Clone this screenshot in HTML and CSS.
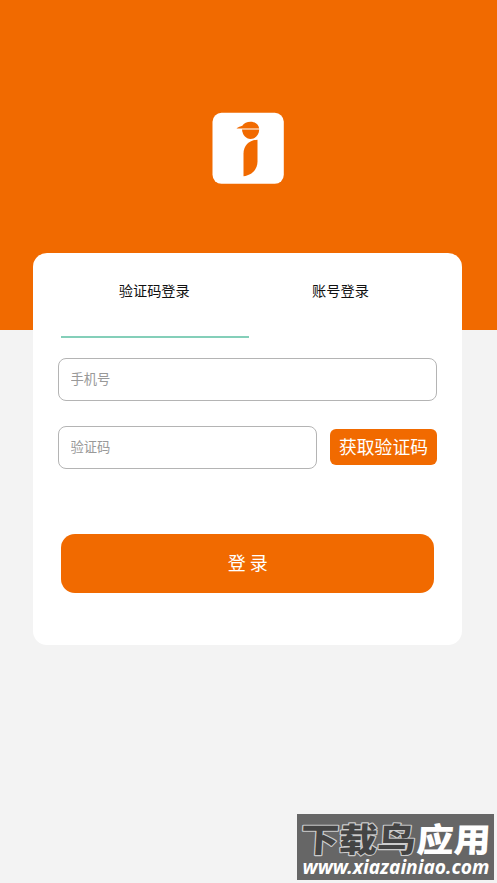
FILE: index.html
```html
<!DOCTYPE html>
<html lang="zh-CN">
<head>
<meta charset="utf-8">
<title>登录</title>
<link rel="stylesheet" href="styles.css">
</head>
<body>
<main class="page">
  <header class="hero">
    <svg class="logo" viewBox="0 0 72 72" aria-hidden="true">
      <rect x=".5" y=".8" width="71.300" height="71" rx="9" fill="#fff"/>
      <path class="logo-mark" d="M24.500 16.400C27 14.500 30 13.900 30.300 13.700C32 11 35 9.700 38.500 9.700C43 9.700 46.500 12 47.200 16.400Z"/>
      <path class="logo-mark" d="M30 17.500H47.200C47 23 43.500 26.900 38.500 26.900C33.800 26.900 30.500 23 30 17.500Z"/>
      <path class="logo-mark" d="M45.500 27.700V49.500C45.500 57.500 39.500 63.500 31.500 64.300V41.500C31.500 33.500 37.500 28 45.500 27.700Z"/>
    </svg>
  </header>
  <section class="card">
    <nav class="tabs">
      <a class="tab active">验证码登录</a>
      <a class="tab">账号登录</a>
    </nav>
    <form class="form">
      <input class="field" type="text" placeholder="手机号">
      <div class="code-row">
        <input class="field" type="text" placeholder="验证码">
        <button class="code-button" type="button">获取验证码</button>
      </div>
      <button class="login-button" type="button">登 录</button>
    </form>
  </section>
  <svg class="watermark" viewBox="0 0 197 66">
    <rect width="197" height="66" fill="#666"/>
    <g transform="translate(0 38) scale(1 .88)">
      <text class="mark-dark" transform="skewX(-3)" x="3" y="0" textLength="115" lengthAdjust="spacingAndGlyphs">下载鸟</text>
      <text class="mark-light" transform="skewX(-3)" x="119" y="0" textLength="74" lengthAdjust="spacingAndGlyphs">应用</text>
    </g>
    <text class="mark-url" x="5.500" y="60" textLength="187" lengthAdjust="spacingAndGlyphs">www.xiazainiao.com</text>
  </svg>
</main>
</body>
</html>
```
FILE: styles.css
```css
* { box-sizing: border-box; }
body {
  margin: 0;
  background: #f3f3f3;
  font-family: "Noto Sans CJK SC", sans-serif;
}
button, input { font: inherit; }
.page {
  position: relative;
  height: 883px;
  overflow: hidden;
}
.hero {
  display: flex;
  justify-content: center;
  height: 329.500px;
  padding: 112px 1px 0 0;
  background: #f16a00;
}
.logo { width: 72px; height: 72px; }
.logo-mark { fill: #f16a00; }
.card {
  position: relative;
  width: 428.500px;
  height: 392px;
  margin: -76.500px 0 0 33px;
  padding: 0 25px;
  background: #fff;
  border-radius: 14px;
}
.tabs {
  display: grid;
  grid-template-columns: 187.500px 1fr;
  height: 85px;
  padding: 0 3px;
}
.tab {
  height: 85px;
  padding-right: 1px;
  line-height: 75px;
  text-align: center;
  font-size: 14.200px;
  color: #111;
  border-bottom: 2px solid transparent;
}
.active { border-color: #84cfb9; }
.form {
  display: flex;
  flex-direction: column;
  padding-top: 20px;
}
.field {
  width: 100%;
  min-width: 0;
  height: 43px;
  padding: 0 11.500px 2px;
  border: 1px solid #b4b4b4;
  border-radius: 8px;
  background: #fff;
  font-size: 13.300px;
}
.field::placeholder { color: #999; opacity: 1; }
.code-row {
  display: flex;
  align-items: flex-start;
  gap: 13px;
  margin-top: 25px;
}
.code-button {
  flex: none;
  width: 107px;
  height: 36px;
  margin-top: 3px;
  padding: 0 0 2px 1px;
  border: 0;
  border-radius: 6px;
  background: #f16a00;
  color: #fff;
  font-size: 17.800px;
  line-height: 34px;
}
.login-button {
  height: 59px;
  margin: 64.500px 3px 0;
  padding: 0 0 3px 1px;
  border: 0;
  border-radius: 14px;
  background: #f16a00;
  color: #fff;
  font-size: 18px;
}
.watermark {
  position: absolute;
  left: 297px;
  top: 813.500px;
  width: 197px;
  height: 66px;
}
.mark-dark, .mark-light {
  font-size: 38px;
  font-weight: 900;
  paint-order: stroke;
  stroke-linejoin: round;
}
.mark-dark { fill: #444; stroke: #ccc; stroke-width: 2.500px; }
.mark-light { fill: #fff; }
.mark-url {
  font-family: "Noto Sans", sans-serif;
  font-size: 19px;
  font-weight: 700;
  font-style: italic;
  fill: #fff;
}
```
